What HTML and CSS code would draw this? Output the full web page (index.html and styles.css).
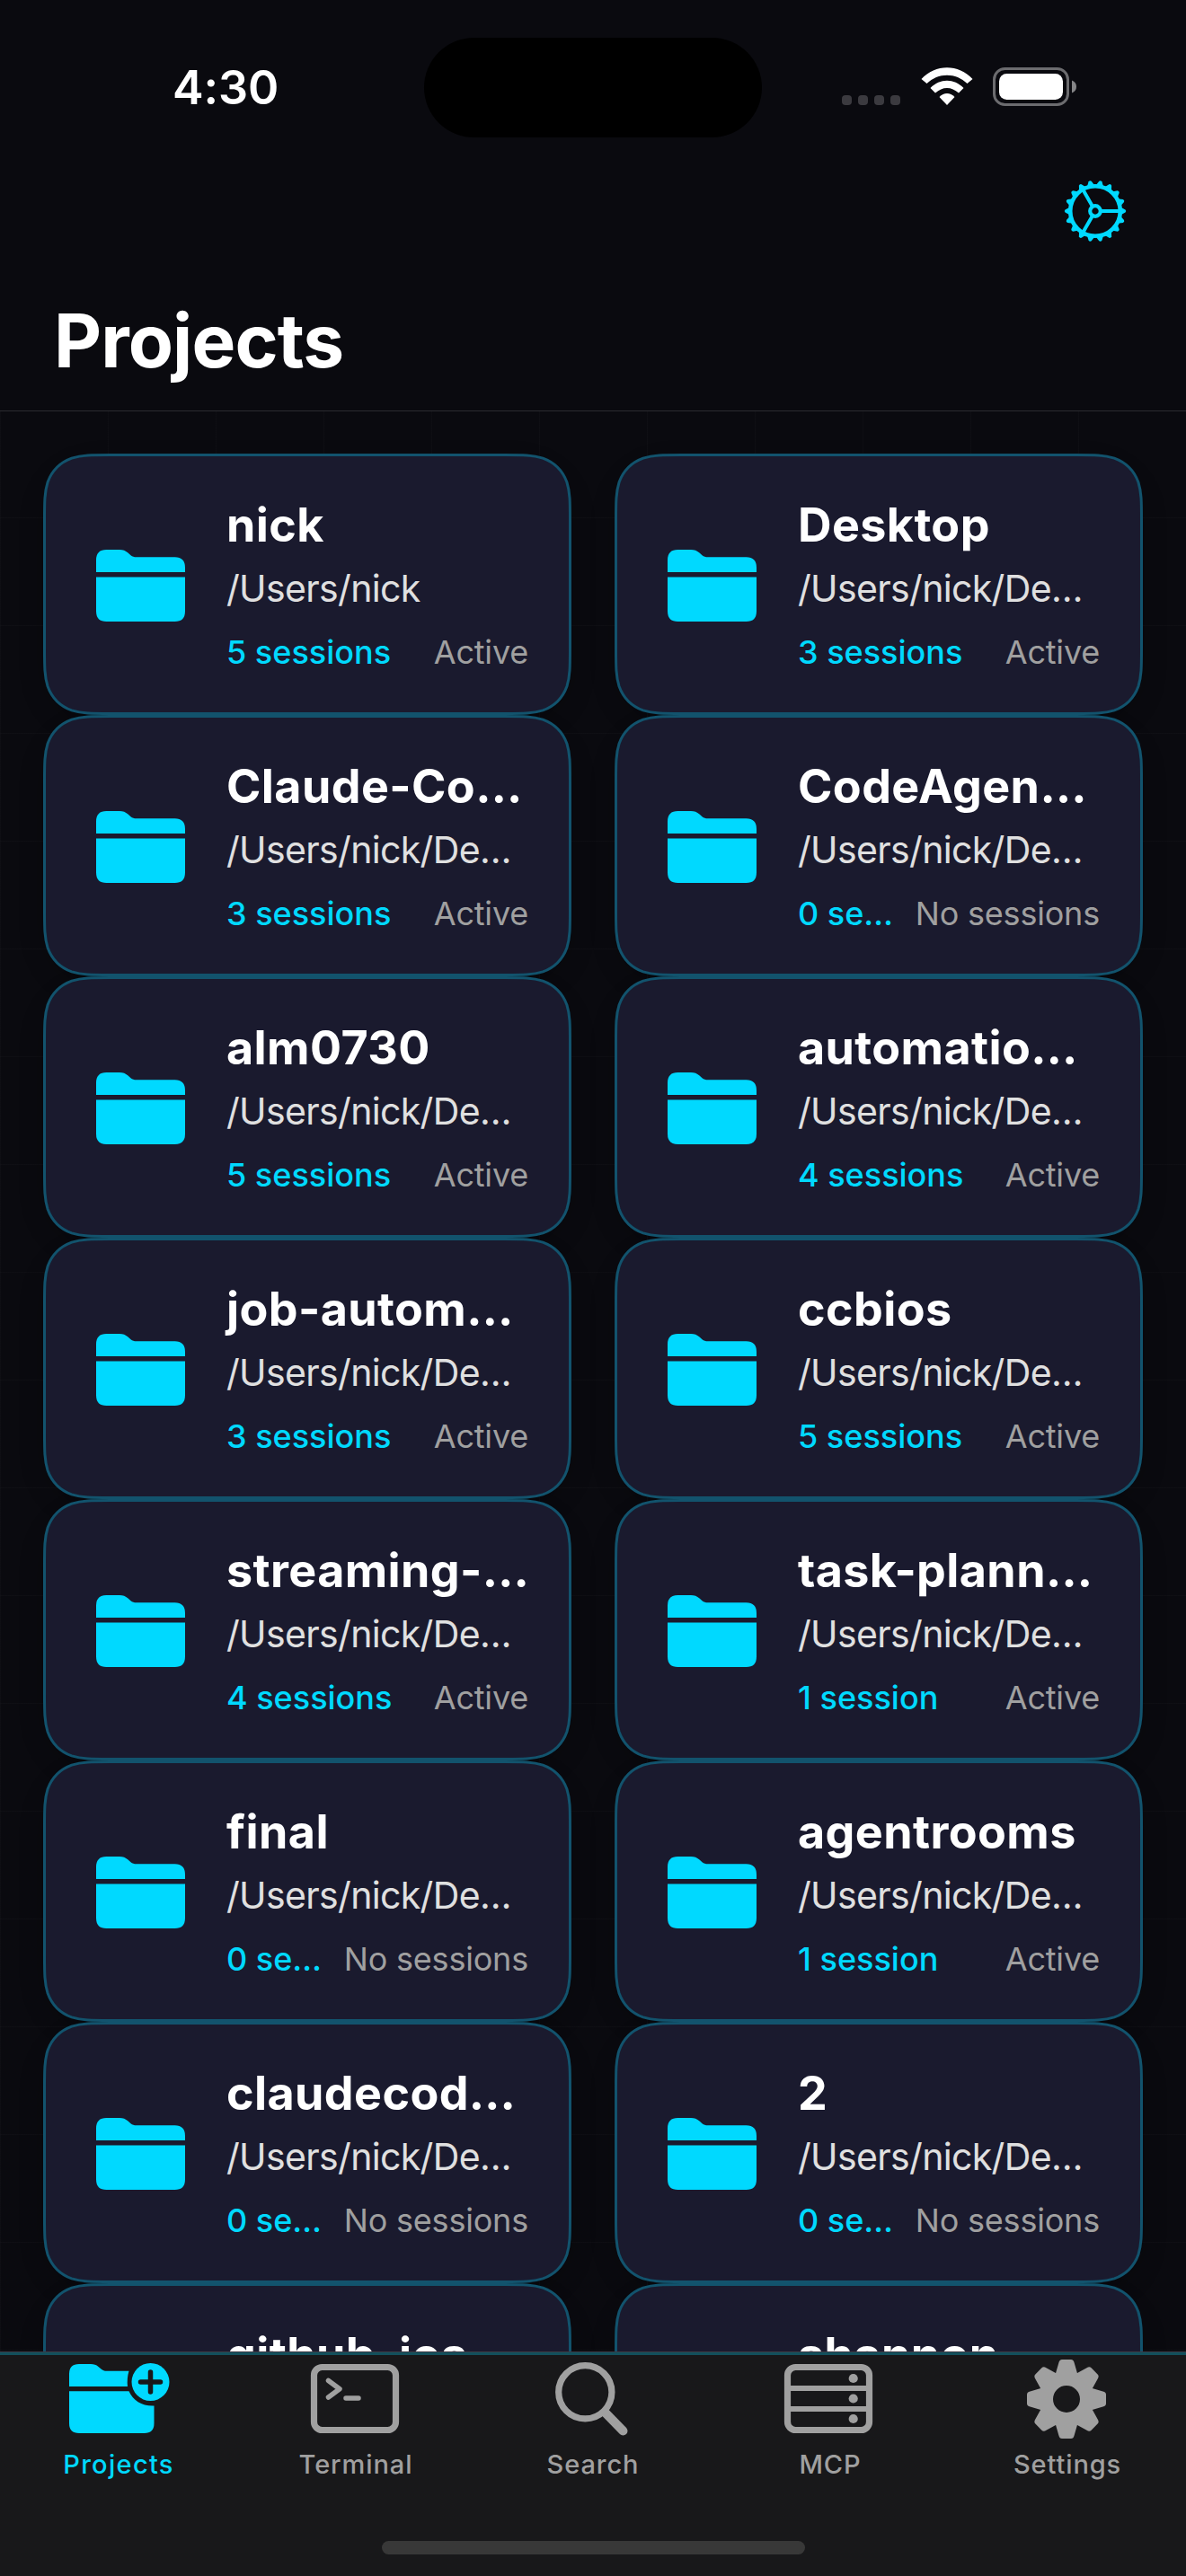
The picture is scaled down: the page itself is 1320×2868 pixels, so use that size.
FILE: index.html
```html
<!DOCTYPE html>
<html lang="en">
<head>
<meta charset="utf-8">
<title>Projects</title>
<link rel="stylesheet" href="styles.css">
</head>
<body>
<svg class="defs" width="0" height="0" aria-hidden="true">
  <symbol id="folder" viewBox="0 0 100 80">
    <path d="M0 25V11.500Q0 0 11.500 0H26C30 0 32.500 1 35.500 3.600L38.500 6.200C40.500 7.700 42 8.200 45 8.200H87.500Q99 8.200 99 20V25Z"/>
    <path d="M0 30.500H99V68.500Q99 80 87.500 80H11.500Q0 80 0 68.500Z"/>
  </symbol>
  <symbol id="panel" viewBox="0 0 588 291">
    <path d="M74.900 1.500H513.100C534.300 1.500 544.800 1.500 556.200 5.100C568.600 9.600 578.400 19.400 582.900 31.800C586.500 43.200 586.500 53.700 586.500 74.900V216.100C586.500 237.300 586.500 247.800 582.900 259.200C578.400 271.600 568.600 281.400 556.200 285.900C544.800 289.500 534.300 289.500 513.100 289.500H74.900C53.700 289.500 43.200 289.500 31.800 285.900C19.400 281.400 9.600 271.600 5.100 259.200C1.500 247.800 1.500 237.300 1.500 216.100V74.900C1.500 53.700 1.500 43.200 5.100 31.800C9.600 19.400 19.400 9.600 31.800 5.100C43.200 1.500 53.700 1.500 74.900 1.500Z"/>
  </symbol>
</svg>
<div class="screen">
  <header class="header">
    <div class="status">
      <span class="time">4:30</span>
      <span class="island"></span>
      <div class="indicators">
        <span class="cell"><i></i><i></i><i></i><i></i></span>
        <svg class="wifi" viewBox="0 0 58 42">
          <path d="M0.500 13C16-4 42-4 57.500 13L51.500 18C39 5.500 19 5.500 6.500 18Z"/>
          <path d="M10.500 23C21 12 37 12 47.500 23L42 28.500C34 21 24 21 16 28.500Z"/>
          <path d="M20.500 33C25.500 27.500 32.500 27.500 37.500 33L29 42Z"/>
        </svg>
        <svg class="battery" viewBox="0 0 93 43">
          <rect class="battery-case" x="1.500" y="1.500" width="82" height="40" rx="12"/>
          <rect x="7" y="7" width="71" height="29" rx="8.500"/>
          <path class="battery-tip" d="M88 14.500Q93 16.500 93 21.500T88 28.500Z"/>
        </svg>
      </div>
    </div>
    <div class="toolbar">
      <svg class="gear" id="gear" viewBox="-35 -35 70 70">
        <circle r="27.800"/>
        <circle class="hub" r="5.800"/>
        <path class="spoke" d="M7 0H27M-3.500 -6.100L-13.500 -23.400M-3.500 6.100L-13.500 23.400"/>
        <g id="teeth"></g>
      </svg>
    </div>
    <h1 class="title">Projects</h1>
  </header>
  <main class="grid" id="grid"></main>
  <nav class="tabs">
    <a class="tab active">
      <svg viewBox="6 3 132 96">
        <path d="M17 38V24Q17 13 28 13H41C44.500 13 47 13.800 49.500 16L52.500 18.500C54.500 20 56 20.800 59 20.800H83.500Q81 29 82 38Z"/>
        <path d="M17 43.200H83.500C88 53.500 98 60 111.500 59.500V79Q111.500 90 100.500 90H28Q17 90 17 79Z"/>
        <circle cx="107.500" cy="33" r="21"/>
        <path class="cut" d="M96.500 33H118.500M107.500 22V44"/>
      </svg>
      <span>Projects</span>
    </a>
    <a class="tab">
      <svg class="line" viewBox="1 2 132 96">
        <rect x="20.500" y="15.500" width="91" height="70" rx="9"/>
        <path d="M36.500 30.500L49 39.800L36.500 49M56 50H70" class="prompt"/>
      </svg>
      <span>Terminal</span>
    </a>
    <a class="tab">
      <svg class="line" viewBox="0 0 132 96">
        <circle cx="57.300" cy="41.300" r="29.600"/>
        <path d="M80 64.500L99.500 84.500" class="handle"/>
      </svg>
      <span>Search</span>
    </a>
    <a class="tab">
      <svg class="line" viewBox="0 0 132 96">
        <rect x="18.500" y="13.500" width="91" height="70" rx="9"/>
        <path d="M18.500 37H109.500M18.500 60H109.500" class="shelf"/>
        <g class="lamps"><circle cx="91.700" cy="26" r="5.100"/><circle cx="91.700" cy="48.500" r="5.100"/><circle cx="91.700" cy="71" r="5.100"/></g>
      </svg>
      <span>MCP</span>
    </a>
    <a class="tab">
      <svg class="cog" viewBox="-65 -49 132 96">
        <defs><path id="cog-tooth" d="M-12.500 -27L-8.600 -40.500Q-7.800 -44 -5 -44H5Q7.800 -44 8.600 -40.500L12.500 -27Z"/></defs>
        <circle class="cog-body" r="23"/>
        <use href="#cog-tooth"/><use href="#cog-tooth" transform="rotate(45)"/><use href="#cog-tooth" transform="rotate(90)"/><use href="#cog-tooth" transform="rotate(135)"/><use href="#cog-tooth" transform="rotate(180)"/><use href="#cog-tooth" transform="rotate(225)"/><use href="#cog-tooth" transform="rotate(270)"/><use href="#cog-tooth" transform="rotate(315)"/>
      </svg>
      <span>Settings</span>
    </a>
    <i class="home"></i>
  </nav>
</div>
<script src="app.js"></script>
</body>
</html>
```
FILE: styles.css
```css
* { box-sizing: border-box; }
body {
  margin: 0;
  background: #0a0a0f;
  color: #fff;
  font-family: Inter, "Liberation Sans", sans-serif;
}
.defs { display: block; position: absolute; }
.screen {
  width: 1320px;
  height: 2868px;
  display: flex;
  flex-direction: column;
  overflow: hidden;
}
.header {
  flex: none;
  height: 458px;
  border-bottom: 1px solid #2b2b30;
}
.status {
  height: 194px;
  display: grid;
  grid-template-columns: 472px 376px 1fr;
  align-items: center;
}
.time {
  padding-left: 30px;
  text-align: center;
  font-size: 52px;
  font-weight: 600;
  letter-spacing: -0.1px;
}
.island { height: 111px; border-radius: 56px; background: #000; }
.indicators { display: flex; align-items: flex-start; padding-left: 89px; height: 44px; }
.cell { display: flex; gap: 7px; padding-top: 31px; width: 88px; }
.cell i { width: 11px; height: 11px; border-radius: 4px; background: #3b3a3f; }
.wifi { width: 58px; height: 42px; fill: #fff; }
.battery { width: 93px; height: 43px; fill: #fff; margin-left: 22px; }
.battery .battery-case { fill: none; stroke: #6c6c6f; stroke-width: 3; }
.battery .battery-tip { fill: #858587; }
.toolbar { height: 130px; display: flex; justify-content: flex-end; padding: 6px 66px 0 0; }
.gear { width: 70px; height: 70px; fill: none; stroke: #00d9ff; stroke-width: 4.6; }
.gear .hub { stroke-width: 4.2; }
.gear .spoke { stroke-width: 4; }
.gear .tooth { fill: #00d9ff; stroke: none; }
.title { margin: 0 0 0 60px; font-size: 82px; line-height: 112px; font-weight: 700; letter-spacing: -0.9px; }
.grid {
  flex: 1;
  min-height: 0;
  overflow: hidden;
  isolation: isolate;
  padding: 47px 48px 0;
  display: grid;
  grid-template-columns: 588px 588px;
  grid-auto-rows: 291px;
  column-gap: 48px;
  background:
    repeating-linear-gradient(to right, rgba(255,255,255,.018) 0 1px, transparent 1px 120px),
    repeating-linear-gradient(to bottom, transparent 0 118px, rgba(255,255,255,.018) 118px 119px, transparent 119px 120px);
}
.card { position: relative; display: flex; align-items: flex-start; padding: 47px 48px 0 59px; }
.card::before {
  content: "";
  position: absolute;
  inset: 4px;
  z-index: -1;
  border-radius: 60px;
  box-shadow: 0 12px 30px rgba(0,0,0,.3);
}
.panel { position: absolute; inset: 0; width: 588px; height: 291px; fill: #1a1a2e; stroke: #12536d; stroke-width: 3; }
.folder { position: relative; flex: none; width: 100px; height: 80px; fill: #00d9ff; margin: 60px 45px 0 0; }
.info { position: relative; flex: 1; min-width: 0; white-space: nowrap; }
.name { font-size: 52px; line-height: 66px; font-weight: 700; margin: 0; letter-spacing: 0.4px; }
.path { font-size: 41px; line-height: 54px; margin-top: 10px; color: #e0e0e0; letter-spacing: -0.65px; }
.meta { display: flex; justify-content: space-between; margin-top: 21px; font-size: 36px; line-height: 46px; }
.count { color: #00d9ff; font-weight: 500; }
.state { color: #a0a0a0; letter-spacing: -0.2px; }
.tabs {
  flex: none;
  position: relative;
  height: 249px;
  border-top: 3px solid #12505c;
  box-shadow: 0 -1px #3c3a45;
  background: #18181a;
  display: grid;
  grid-template-columns: repeat(5, 264px);
}
.tab { display: flex; flex-direction: column; align-items: center; font-size: 29px; line-height: 38px; font-weight: 500; letter-spacing: 0.9px; color: #a0a0a0; fill: #a0a0a0; }
.tab svg { width: 132px; height: 96px; margin-bottom: 7px; overflow: visible; }
.tab.active { color: #00d9ff; fill: #00d9ff; letter-spacing: 1.3px; }
.cut { stroke: #18181a; stroke-width: 5.5; stroke-linecap: round; }
.tab .line { fill: none; stroke: #a0a0a0; stroke-width: 7.2; stroke-linecap: round; stroke-linejoin: round; }
.line .prompt { stroke-width: 5.5; }
.line .handle { stroke-width: 10; }
.line .shelf { stroke-width: 6; }
.line .lamps { fill: #a0a0a0; stroke: none; }
.cog-body { fill: none; stroke: #a0a0a0; stroke-width: 16; }
.home { position: absolute; left: 425px; bottom: 24px; width: 471px; height: 15px; border-radius: 8px; background: #383838; }
```
FILE: app.js
```js
const D = '/Users/nick/De…';
const projects = [
  ['nick', '/Users/nick', '5 sessions', 'Active'],
  ['Desktop', D, '3 sessions', 'Active'],
  ['Claude-Co…', D, '3 sessions', 'Active'],
  ['CodeAgen…', D, '0 se…', 'No sessions'],
  ['alm0730', D, '5 sessions', 'Active'],
  ['automatio…', D, '4 sessions', 'Active'],
  ['job-autom…', D, '3 sessions', 'Active'],
  ['ccbios', D, '5 sessions', 'Active'],
  ['streaming-…', D, '4 sessions', 'Active'],
  ['task-plann…', D, '1 session', 'Active'],
  ['final', D, '0 se…', 'No sessions'],
  ['agentrooms', D, '1 session', 'Active'],
  ['claudecod…', D, '0 se…', 'No sessions'],
  ['2', D, '0 se…', 'No sessions'],
  ['github_ios'],
  ['shannon']
];
document.getElementById('grid').innerHTML = projects.map(([name, path, count, state]) => `
  <article class="card">
    <svg class="panel"><use href="#panel"/></svg>
    <svg class="folder"><use href="#folder"/></svg>
    <div class="info">
      <h2 class="name">${name}</h2>
      ${path ? `<div class="path">${path}</div>
      <div class="meta"><span class="count">${count}</span><span class="state">${state}</span></div>` : ''}
    </div>
  </article>`).join('');

// The gear has 18 teeth, 20 degrees apart.
document.getElementById('teeth').innerHTML = Array.from({ length: 18 }, (_, i) =>
  `<path class="tooth" d="M28 -4.500L33.500 -1.600Q35 0 33.500 1.600L28 4.500Z" transform="rotate(${i * 20})"/>`).join('');
```
